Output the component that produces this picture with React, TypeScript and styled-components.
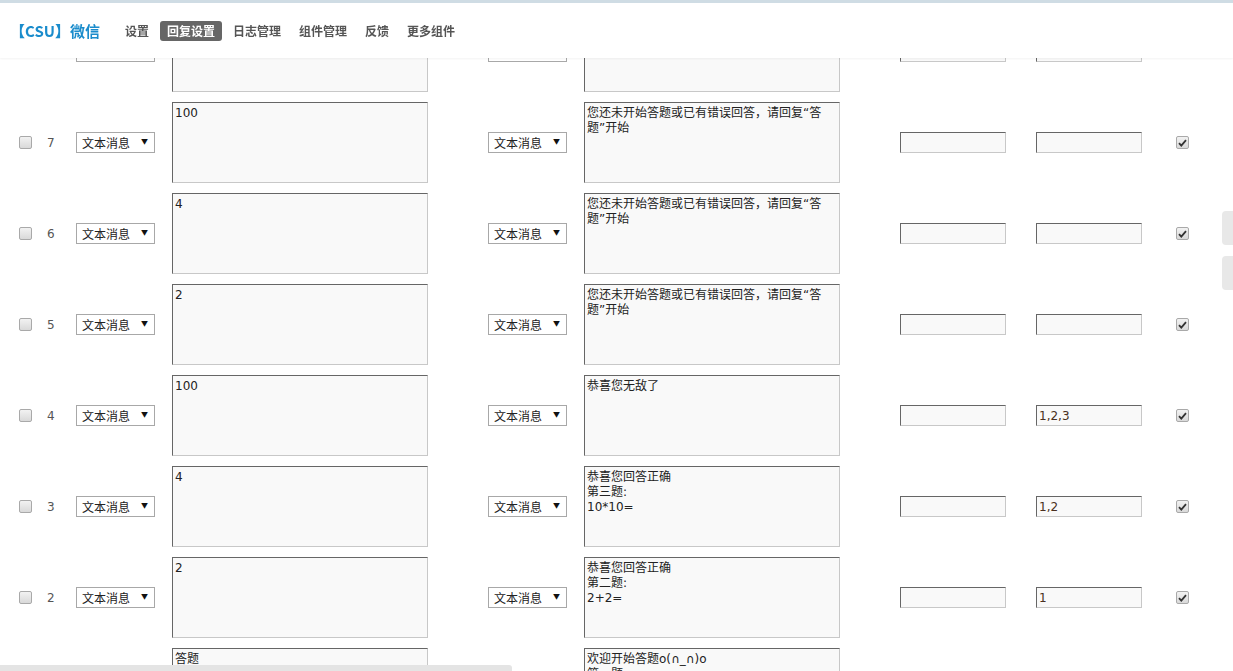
import React from "react";
import styled, { createGlobalStyle } from "styled-components";

type Rule = {
  id: number;
  keyword: string;
  reply: string;
  prev: string;
  next: string;
  enabled: boolean;
};

const wrongReply = "您还未开始答题或已有错误回答，请回复“答题”开始";

const rules: Rule[] = [
  { id: 8, keyword: "10*10", reply: wrongReply, prev: "", next: "", enabled: true },
  { id: 7, keyword: "100", reply: wrongReply, prev: "", next: "", enabled: true },
  { id: 6, keyword: "4", reply: wrongReply, prev: "", next: "", enabled: true },
  { id: 5, keyword: "2", reply: wrongReply, prev: "", next: "", enabled: true },
  { id: 4, keyword: "100", reply: "恭喜您无敌了", prev: "", next: "1,2,3", enabled: true },
  { id: 3, keyword: "4", reply: "恭喜您回答正确\n第三题:\n10*10=", prev: "", next: "1,2", enabled: true },
  { id: 2, keyword: "2", reply: "恭喜您回答正确\n第二题:\n2+2=", prev: "", next: "1", enabled: true },
  { id: 1, keyword: "答题", reply: "欢迎开始答题o(∩_∩)o\n第一题:\n1+1=", prev: "", next: "", enabled: true },
];

const navItems = ["设置", "回复设置", "日志管理", "组件管理", "反馈", "更多组件"];

export default function App() {
  return (
    <>
      <GlobalStyle />
      <Header>
        <Brand>【CSU】微信</Brand>
        <Nav>
          {navItems.map((item) => (
            <NavItem key={item} active={item === "回复设置"}>
              {item}
            </NavItem>
          ))}
        </Nav>
      </Header>

      <RuleList>
        {rules.map((rule) => (
          <RuleRow key={rule.id}>
            <CheckCell>
              <Checkbox checked={false} />
            </CheckCell>
            <IdCell>{rule.id}</IdCell>
            <SelectCell>
              <FakeSelect>
                <span>文本消息</span>
                <Arrow>▼</Arrow>
              </FakeSelect>
            </SelectCell>
            <Cell>
              <TextBox readOnly value={rule.keyword} />
            </Cell>
            <Cell>
              <FakeSelect>
                <span>文本消息</span>
                <Arrow>▼</Arrow>
              </FakeSelect>
            </Cell>
            <Cell>
              <TextBox readOnly value={rule.reply} />
            </Cell>
            <Cell>
              <TextInput readOnly value={rule.prev} />
            </Cell>
            <Cell>
              <TextInput readOnly value={rule.next} />
            </Cell>
            <Cell>
              <Checkbox checked={rule.enabled} />
            </Cell>
          </RuleRow>
        ))}
      </RuleList>

      <SideTabs>
        <SideTab />
        <SideTab />
      </SideTabs>
      <ScrollThumb />
    </>
  );
}

function Checkbox({ checked }: { checked: boolean }) {
  return (
    <CheckBoxFace>
      {checked && (
        <svg width="9" height="8" viewBox="0 0 9 8">
          <path d="M1 4.2 L3.3 6.6 L8 1.2" fill="none" stroke="#333" strokeWidth="1.8" />
        </svg>
      )}
    </CheckBoxFace>
  );
}

const GlobalStyle = createGlobalStyle`
  html, body {
    margin: 0;
    padding: 0;
    background: #fff;
    overflow: hidden;
    font-family: "DejaVu Sans", "Noto Sans CJK SC", sans-serif;
    font-size: 12px;
    color: #222;
  }
`;

const Header = styled.header`
  position: fixed;
  top: 0;
  left: 0;
  right: 0;
  z-index: 10;
  height: 55px;
  display: flex;
  align-items: center;
  padding: 0 0 0 10px;
  background: #fff;
  border-top: 3px solid #cfdce4;
  box-shadow: 0 1px 2px rgba(0, 0, 0, 0.05);
`;

const Brand = styled.div`
  font-family: "Noto Sans CJK SC", sans-serif;
  font-size: 15px;
  font-weight: 700;
  color: #1a8ccc;
  margin-right: 18px;
`;

const Nav = styled.nav`
  display: flex;
  align-items: center;
  gap: 4px;
`;

const NavItem = styled.span<{ active?: boolean }>`
  font-family: "Noto Sans CJK SC", sans-serif;
  font-size: 12px;
  font-weight: 700;
  line-height: 20px;
  padding: 0 7px;
  border-radius: 3px;
  color: ${({ active }) => (active ? "#fff" : "#555")};
  background: ${({ active }) => (active ? "#666" : "transparent")};
`;

const RuleList = styled.div`
  padding-top: 6px;
  width: 1233px;
`;

const RuleRow = styled.div`
  display: grid;
  grid-template-columns: 38px 28px 106px 316px 96px 316px 136px 140px 1fr;
  align-items: center;
  height: 91px;
`;

const Cell = styled.div`
  display: flex;
  align-items: center;
`;

const CheckCell = styled(Cell)`
  padding-left: 19px;
`;

const IdCell = styled(Cell)`
  padding-left: 9px;
  font-family: "DejaVu Sans", sans-serif;
  font-size: 12px;
  color: #555;
`;

const SelectCell = styled(Cell)`
  padding-left: 10px;
`;

const FakeSelect = styled.div`
  box-sizing: border-box;
  width: 79px;
  height: 21px;
  display: flex;
  align-items: center;
  justify-content: space-between;
  padding: 0 6px 0 5px;
  border: 1px solid #a8a8a8;
  background: #fff;
  font-family: "Noto Sans CJK SC", sans-serif;
  font-size: 12px;
  color: #222;
`;

const Arrow = styled.span`
  font-size: 7px;
  color: #111;
  margin-top: -3px;
`;

const TextBox = styled.textarea`
  box-sizing: border-box;
  width: 256px;
  height: 81px;
  margin: 0;
  padding: 3px 10px 0 2px;
  resize: none;
  overflow: hidden;
  border-style: solid;
  border-width: 1px;
  border-color: #666 #c8c8c8 #c8c8c8 #666;
  background: #f9f9f9;
  font-family: "DejaVu Sans", "Noto Sans CJK SC", sans-serif;
  font-size: 12px;
  line-height: 15px;
  color: #222;
  outline: none;
`;

const TextInput = styled.input`
  box-sizing: border-box;
  width: 106px;
  height: 21px;
  margin: 0;
  padding: 0 2px;
  border-style: solid;
  border-width: 1px;
  border-color: #666 #c8c8c8 #c8c8c8 #666;
  background: #f9f9f9;
  font-family: "DejaVu Sans", sans-serif;
  font-size: 12px;
  color: #4a3020;
  outline: none;
`;

const CheckBoxFace = styled.span`
  box-sizing: border-box;
  width: 13px;
  height: 13px;
  display: inline-flex;
  align-items: center;
  justify-content: center;
  border: 1px solid #a9a9a9;
  border-radius: 2px;
  background: linear-gradient(#f2f2f2, #d9d9d9);
`;

const SideTabs = styled.div`
  position: fixed;
  right: 0;
  top: 211px;
  display: flex;
  flex-direction: column;
  gap: 11px;
`;

const SideTab = styled.div`
  width: 11px;
  height: 34px;
  border-radius: 4px 0 0 4px;
  background: #e8e8e8;
`;

const ScrollThumb = styled.div`
  position: fixed;
  left: 0;
  bottom: 0;
  width: 512px;
  height: 6px;
  background: #e4e4e4;
  border-radius: 0 3px 0 0;
`;
